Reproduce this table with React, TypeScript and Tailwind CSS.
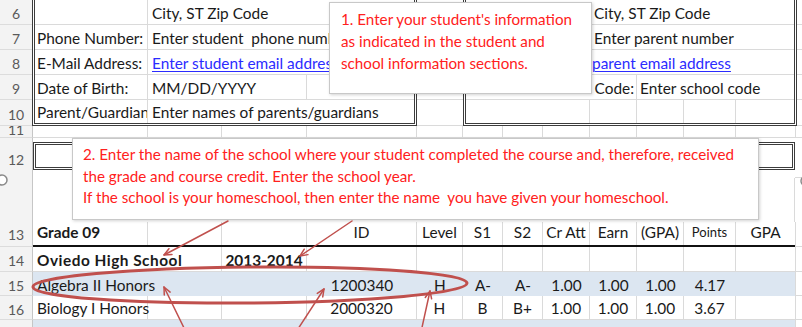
import clsx from "clsx";
import type { ReactNode } from "react";

// column widths A–L of the transcript sheet (A starts right after the row numbers)
const colW = [
  "w-[115px]",
  "w-[74px]",
  "w-[85px]",
  "w-[110px]",
  "w-[46px]",
  "w-[40px]",
  "w-[40px]",
  "w-[47px]",
  "w-[47px]",
  "w-[47px]",
  "w-[52px]",
  "w-[59px]",
];

type Cell = { text?: string; bold?: boolean; noLine?: boolean; small?: boolean; wide?: boolean };

function RowNum({ n, className }: { n?: number; className?: string }) {
  return (
    <div
      className={clsx(
        "flex w-[33px] shrink-0 items-center justify-center border-r border-b border-r-[#c6c6c6] border-b-[#dcdcdc] bg-[#f3f3f3] pt-[3px] text-[14px] text-[#5a5a5a]",
        className
      )}
    >
      {n}
    </div>
  );
}

function SheetRow({
  n,
  h,
  cells = [],
  fill,
  rule,
}: {
  n?: number;
  h: string;
  cells?: Cell[];
  fill?: boolean;
  rule?: boolean;
}) {
  return (
    <div className={clsx("flex", h)}>
      <RowNum n={n} className={rule ? "pt-0 pb-[2px]" : undefined} />
      <div
        className={clsx(
          "flex w-[762px] shrink-0",
          fill && "bg-[#dce6f1]",
          rule && "border-b-2 border-[#111]"
        )}
      >
        {colW.map((w, i) => {
          const c = cells[i] ?? {};
          return (
            <div
              key={i}
              className={clsx(
                w,
                "flex shrink-0 items-center whitespace-nowrap border-[#dadada]",
                rule ? "pb-[2px]" : "pt-[3px]",
                i === 0 ? "justify-start pl-[4px]" : "justify-center",
                !fill && !c.noLine && i < 11 && "border-r",
                !fill && !rule && "border-b",
                c.bold && "font-bold",
                c.small && "text-[13px]",
                c.wide && "tracking-[0.5px]"
              )}
            >
              {c.text}
            </div>
          );
        })}
      </div>
      <div className="flex-1 border-b border-l border-[#dadada]" />
    </div>
  );
}

function BoxRow({
  a,
  b,
  h = "h-[25px]",
  last,
}: {
  a: string;
  b: ReactNode;
  h?: string;
  last?: boolean;
}) {
  return (
    <div className={clsx("flex", h, !last && "border-b border-[#dadada]")}>
      <div className="flex w-[113px] shrink-0 items-center overflow-hidden whitespace-nowrap border-r border-[#dadada] pl-[2px] pt-[3px]">
        {a}
      </div>
      <div className="flex flex-1 items-center whitespace-nowrap pl-[4px] pt-[3px]">{b}</div>
    </div>
  );
}

function GridColumn({ w }: { w: string }) {
  const hs = ["h-[25px]", "h-[25px]", "h-[25px]", "h-[25px]", "h-[26px]"];
  return (
    <div className={clsx("flex shrink-0 flex-col", w)}>
      {hs.map((h, i) => (
        <div key={i} className={clsx(h, "border-b border-[#dadada]")} />
      ))}
    </div>
  );
}

const link = "text-[#2b2bff] underline decoration-1 underline-offset-2";

function InfoBlock() {
  const nums = [6, 7, 8, 9, 10];
  const hs = ["h-[25px]", "h-[25px]", "h-[25px]", "h-[25px]", "h-[26px]"];
  return (
    <div className="flex h-[126px]">
      <div className="flex w-[32px] shrink-0 flex-col bg-[#f3f3f3]">
        {nums.map((n, i) => (
          <div
            key={n}
            className={clsx(
              hs[i],
              "flex items-center justify-center border-b border-[#dcdcdc] pt-[3px] text-[14px] text-[#5a5a5a]"
            )}
          >
            {n}
          </div>
        ))}
      </div>

      {/* student information box */}
      <div className="flex w-[385px] shrink-0 flex-col border-x-[3px] border-b-[3px] border-double border-[#3c3c3c]">
        <BoxRow a="" b="City, ST Zip Code" />
        <BoxRow a="Phone Number:" b={<span className="whitespace-pre">Enter student  phone number</span>} />
        <BoxRow a="E-Mail Address:" b={<span className={link}>Enter student email address</span>} />
        <div className="flex h-[25px] border-b border-[#dadada]">
          <div className="flex w-[113px] shrink-0 items-center border-r border-[#dadada] pl-[2px] pt-[3px]">
            Date of Birth:
          </div>
          <div className="flex w-[159px] shrink-0 items-center border-r border-[#dadada] pl-[4px] pt-[3px]">
            MM/DD/YYYY
          </div>
          <div className="flex-1" />
        </div>
        <BoxRow a="Parent/Guardian" b="Enter names of parents/guardians" h="h-[23px]" last />
      </div>

      <GridColumn w="w-[46px]" />

      {/* parent / school information box */}
      <div className="flex w-[334px] shrink-0 flex-col border-x-[3px] border-b-[3px] border-double border-[#3c3c3c]">
        <div className="flex h-[25px] border-b border-[#dadada]">
          <div className="w-[124px] shrink-0" />
          <div className="flex flex-1 items-center whitespace-nowrap pl-[4px] pt-[3px]">City, ST Zip Code</div>
        </div>
        <div className="flex h-[25px] border-b border-[#dadada]">
          <div className="w-[124px] shrink-0" />
          <div className="flex flex-1 items-center whitespace-nowrap pl-[4px] pt-[3px]">Enter parent number</div>
        </div>
        <div className="flex h-[25px] border-b border-[#dadada]">
          <div className="w-[124px] shrink-0" />
          <div className="flex flex-1 items-center whitespace-nowrap pl-[2px] pt-[3px]">
            <span className={link}>parent email address</span>
          </div>
        </div>
        <div className="flex h-[25px] border-b border-[#dadada]">
          <div className="w-[124px] shrink-0" />
          <div className="flex w-[47px] shrink-0 items-center justify-end whitespace-nowrap border-r border-[#dadada] pr-[2px] pt-[3px]">
            Code:
          </div>
          <div className="flex flex-1 items-center whitespace-nowrap pl-[3px] pt-[3px]">Enter school code</div>
        </div>
        <div className="flex h-[23px]">
          <div className="w-[124px] shrink-0 border-r border-[#dadada]" />
          <div className="w-[47px] shrink-0 border-r border-[#dadada]" />
          <div className="w-[47px] shrink-0 border-r border-[#dadada]" />
          <div className="w-[52px] shrink-0 border-r border-[#dadada]" />
          <div className="flex-1" />
        </div>
      </div>

      <GridColumn w="flex-1" />
    </div>
  );
}

function Arrow({ x1, y1, x2, y2 }: { x1: number; y1: number; x2: number; y2: number }) {
  const a = Math.atan2(y2 - y1, x2 - x1);
  const len = 8;
  const s = 0.42;
  const p1 = `${x2 - len * Math.cos(a - s)},${y2 - len * Math.sin(a - s)}`;
  const p2 = `${x2 - len * Math.cos(a + s)},${y2 - len * Math.sin(a + s)}`;
  return (
    <g stroke="#c0504d" strokeWidth={1.5} fill="none" strokeLinecap="round">
      <line x1={x1} y1={y1} x2={x2} y2={y2} />
      <path d={`M${p1} L${x2},${y2} L${p2}`} strokeLinejoin="round" />
    </g>
  );
}

export default function App() {
  return (
    <div className="relative h-[327px] w-[802px] overflow-hidden bg-white font-['Lato','Liberation_Sans',sans-serif] text-[15.4px] text-[#1a1a1a]">
      <InfoBlock />

      {/* row 11 */}
      <div className="flex h-[12px] overflow-hidden">
        <RowNum n={11} className="items-end pt-0 leading-[14px]" />
        <div className="flex w-[762px] shrink-0">
          {colW.map((w, i) => (
            <div key={i} className={clsx(w, "shrink-0 border-b border-[#dadada]", i < 11 && "border-r")} />
          ))}
        </div>
        <div className="flex-1 border-b border-l border-[#dadada]" />
      </div>

      {/* row 12: boxed school line */}
      <div className="flex h-[40px]">
        <RowNum n={12} className="border-b-0" />
        <div className="w-[762px] shrink-0 pt-[4px]">
          <div className="h-[28px] border-[3px] border-double border-[#3c3c3c]" />
        </div>
        <div className="flex-1 border-b border-[#dadada]" />
      </div>
      <div className="flex h-[44px]">
        <RowNum className="border-b-0" />
        <div className="w-[762px] shrink-0 border-r border-[#dadada]" />
        <div className="flex-1" />
      </div>

      <SheetRow
        n={13}
        h="h-[25px]"
        rule
        cells={[
          { text: "Grade 09", bold: true },
          {},
          {},
          { text: "ID" },
          { text: "Level" },
          { text: "S1" },
          { text: "S2" },
          { text: "Cr Att" },
          { text: "Earn" },
          { text: "(GPA)" },
          { text: "Points", small: true },
          { text: "GPA" },
        ]}
      />
      <SheetRow
        n={14}
        h="h-[25px]"
        cells={[
          { text: "Oviedo High School", bold: true, noLine: true, wide: true },
          {},
          { text: "2013-2014", bold: true },
        ]}
      />
      <SheetRow
        n={15}
        h="h-[24px]"
        fill
        cells={[
          { text: "Algebra II Honors" },
          {},
          {},
          { text: "1200340" },
          { text: "H" },
          { text: "A-" },
          { text: "A-" },
          { text: "1.00" },
          { text: "1.00" },
          { text: "1.00" },
          { text: "4.17" },
        ]}
      />
      <SheetRow
        n={16}
        h="h-[24px]"
        cells={[
          { text: "Biology I Honors" },
          {},
          {},
          { text: "2000320" },
          { text: "H" },
          { text: "B" },
          { text: "B+" },
          { text: "1.00" },
          { text: "1.00" },
          { text: "1.00" },
          { text: "3.67" },
        ]}
      />
      <SheetRow h="h-[25px]" fill />

      {/* note 1 */}
      <div className="absolute left-[329px] top-[2px] h-[92px] w-[263px] whitespace-nowrap border border-[#c8c8c8] bg-white pl-[11px] pt-[5px] text-[15.2px] leading-[22px] text-[#ff2020] shadow-[1px_1px_3px_rgba(0,0,0,0.18)]">
        <p>1. Enter your student's information</p>
        <p>as indicated in the student and</p>
        <p>school information sections.</p>
      </div>

      {/* note 2 */}
      <div className="absolute left-[72px] top-[138px] h-[82px] w-[687px] whitespace-pre border border-[#c8c8c8] bg-white pl-[10px] pt-[5px] text-[15.2px] leading-[21.5px] text-[#ff2020] shadow-[1px_1px_3px_rgba(0,0,0,0.18)]">
        <p>2. Enter the name of the school where your student completed the course and, therefore, received</p>
        <p>the grade and course credit. Enter the school year.</p>
        <p>If the school is your homeschool, then enter the name  you have given your homeschool.</p>
      </div>

      {/* pointer arrows, highlight ring and shape handles */}
      <svg className="pointer-events-none absolute inset-0" width={802} height={327}>
        <ellipse
          cx={250}
          cy={285}
          rx={217}
          ry={18}
          transform="rotate(-0.5 250 285)"
          fill="none"
          stroke="#c0504d"
          strokeWidth={3}
        />
        <Arrow x1={228} y1={221} x2={164} y2={255} />
        <Arrow x1={352} y1={221} x2={300} y2={256} />
        <Arrow x1={186} y1={332} x2={164} y2={287} />
        <Arrow x1={296} y1={332} x2={324} y2={289} />
        <Arrow x1={421} y1={332} x2={430} y2={291} />
        <circle cx={2} cy={180} r={5} fill="white" stroke="#8a8a8a" strokeWidth={1.5} />
        <circle cx={806} cy={181} r={5} fill="white" stroke="#8a8a8a" strokeWidth={1.5} />
      </svg>
    </div>
  );
}
